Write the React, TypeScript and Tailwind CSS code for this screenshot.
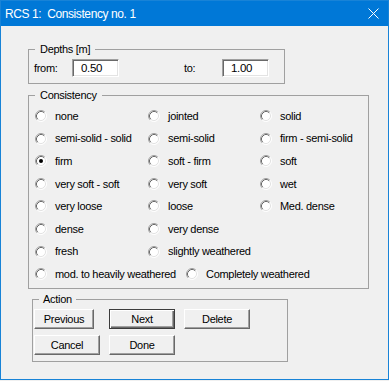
import React from "react";

const rows: string[][] = [
  ["none", "jointed", "solid"],
  ["semi-solid - solid", "semi-solid", "firm - semi-solid"],
  ["firm", "soft - firm", "soft"],
  ["very soft - soft", "very soft", "wet"],
  ["very loose", "loose", "Med. dense"],
  ["dense", "very dense"],
  ["fresh", "slightly weathered"],
];

const Radio = ({ checked }: { checked?: boolean }) => (
  <svg width="12" height="12" viewBox="0 0 12 12" className="shrink-0">
    <circle cx="6" cy="6" r="5" fill="#fff" />
    <path d="M2.11 9.89 A5.5 5.5 0 0 1 9.89 2.11" fill="none" stroke="#a0a0a0" />
    <path d="M9.89 2.11 A5.5 5.5 0 0 1 2.11 9.89" fill="none" stroke="#fff" />
    <path d="M2.82 9.18 A4.5 4.5 0 0 1 9.18 2.82" fill="none" stroke="#696969" />
    <path d="M9.18 2.82 A4.5 4.5 0 0 1 2.82 9.18" fill="none" stroke="#e3e3e3" />
    {checked && <circle cx="6" cy="6" r="2" fill="#000" />}
  </svg>
);

const Option = ({ label, checked }: { label: string; checked?: boolean }) => (
  <div className="flex items-center gap-[8px] whitespace-nowrap">
    <Radio checked={checked} />
    <span>{label}</span>
  </div>
);

const Btn = ({ label, w, def }: { label: string; w: string; def?: boolean }) =>
  def ? (
    <button className={`${w} h-[20px] border border-[#3c3c3c] bg-[#f0f0f0] shadow-[inset_1px_1px_0_#fff,inset_-1px_-1px_0_#696969,inset_-2px_-2px_0_#a0a0a0] text-center`}>
      {label}
    </button>
  ) : (
    <button className={`${w} h-[20px] border border-t-white border-l-white border-r-[#696969] border-b-[#696969] bg-[#f0f0f0] shadow-[inset_-1px_-1px_0_#a0a0a0] text-center`}>
      {label}
    </button>
  );

const Field = ({ value, w }: { value: string; w: string }) => (
  <div className={`${w} h-[18px] border border-t-[#a0a0a0] border-l-[#a0a0a0] border-b-white border-r-white bg-white shadow-[inset_1px_1px_0_#696969,inset_-1px_-1px_0_#e3e3e3] pl-[8px] text-[11.5px] leading-[16px]`}>
    {value}
  </div>
);

export default function App() {
  return (
    <div className="w-[389px] h-[381px] bg-[#f0f0f0] font-['Liberation_Sans',Arial,sans-serif] text-black">
      <div className="w-[389px] h-[380px] border border-[#1883d7] bg-[#f0f0f0] flex flex-col">
        <div className="h-[25px] bg-[#0078d7] flex items-center justify-between pl-[4px] pr-[9px] text-white">
          <span className="text-[12px] tracking-[-0.4px] whitespace-pre">RCS 1:  Consistency no. 1</span>
          <svg width="11" height="11" viewBox="0 0 11 11">
            <path d="M0.5 0.5 L10.5 10.5 M10.5 0.5 L0.5 10.5" stroke="#fff" strokeWidth="1" />
          </svg>
        </div>

        <div className="flex-1 flex flex-col text-[11px] tracking-[-0.3px]">
          <fieldset className="mt-[16px] ml-[27px] w-[257px] h-[42px] border border-[#a0a0a0]">
            <legend className="ml-[6px] px-[5px] leading-[14px]">Depths [m]</legend>
            <div className="mt-[3px] pl-[5px] flex items-center">
              <span className="w-[38px]">from:</span>
              <Field value="0.50" w="w-[47px]" />
              <span className="ml-[65px] w-[38px]">to:</span>
              <Field value="1.00" w="w-[47px]" />
            </div>
          </fieldset>

          <fieldset className="mt-[4px] ml-[27px] w-[341px] h-[201px] border border-[#a0a0a0]">
            <legend className="ml-[6px] px-[5px] leading-[14px]">Consistency</legend>
            <div className="mt-[2.7px] pl-[6px] grid grid-cols-[113px_112px_1fr] auto-rows-[22.6px] items-center">
              {rows.map((r, i) => (
                <React.Fragment key={i}>
                  {r.map((label) => (
                    <Option key={label} label={label} checked={label === "firm"} />
                  ))}
                  {r.length < 3 && <div />}
                </React.Fragment>
              ))}
              <div className="col-span-3 flex items-center">
                <div className="w-[151px]">
                  <Option label="mod. to heavily weathered" />
                </div>
                <Option label="Completely weathered" />
              </div>
            </div>
          </fieldset>

          <fieldset className="mt-[3px] ml-[31px] w-[256px] h-[70px] border border-[#a0a0a0]">
            <legend className="ml-[6px] px-[4px] leading-[14px]">Action</legend>
            <div className="mt-[3px] pl-[1px] flex flex-col gap-[6px]">
              <div className="flex">
                <Btn label="Previous" w="w-[60px]" />
                <div className="ml-[15px]">
                  <Btn label="Next" w="w-[66px]" def />
                </div>
                <div className="ml-[9px]">
                  <Btn label="Delete" w="w-[66px]" />
                </div>
              </div>
              <div className="flex gap-[9px]">
                <Btn label="Cancel" w="w-[66px]" />
                <Btn label="Done" w="w-[66px]" />
              </div>
            </div>
          </fieldset>
        </div>
      </div>
    </div>
  );
}
